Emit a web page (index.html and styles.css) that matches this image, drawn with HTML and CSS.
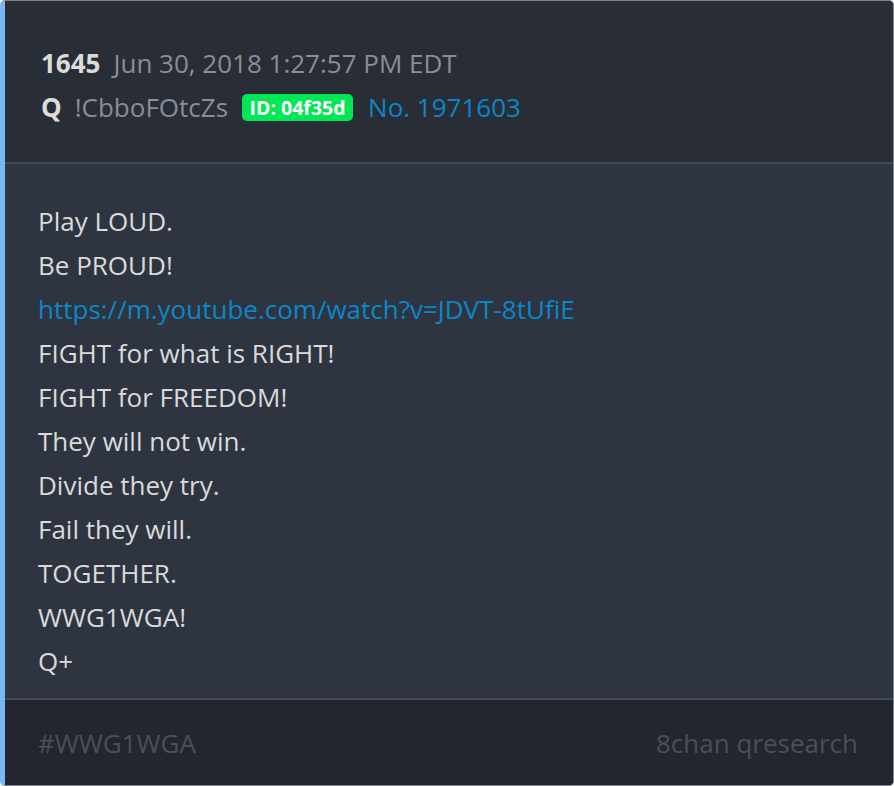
FILE: index.html
```html
<!DOCTYPE html>
<html lang="en">

<head>
    <meta charset="UTF-8">
    <meta name="viewport" content="width=device-width, initial-scale=1.0">
    <title>Post 1645</title>
    <link rel="stylesheet" href="styles.css">
</head>

<body>
    <div class="post">
        <div class="post-head">
            <div class="head-line">
                <span class="post-num">1645</span>
                <span class="post-date">Jun 30, 2018 1:27:57 PM EDT</span>
            </div>
            <div class="head-line">
                <span class="author">Q</span>
                <span class="trip">!CbboFOtcZs</span>
                <span class="user-id">ID: 04f35d</span>
                <a class="post-link" href="#">No. 1971603</a>
            </div>
        </div>

        <div class="post-body">
            <div>Play LOUD.</div>
            <div>Be PROUD!</div>
            <div><a href="#">https://m.youtube.com/watch?v=JDVT-8tUfiE</a></div>
            <div>FIGHT for what is RIGHT!</div>
            <div>FIGHT for FREEDOM!</div>
            <div>They will not win.</div>
            <div>Divide they try.</div>
            <div>Fail they will.</div>
            <div>TOGETHER.</div>
            <div>WWG1WGA!</div>
            <div>Q+</div>
        </div>

        <div class="post-foot">
            <span>#WWG1WGA</span>
            <span>8chan qresearch</span>
        </div>
    </div>
</body>

</html>
```

FILE: styles.css
```css
* {
    box-sizing: border-box;
}

body {
    margin: 0;
    background-color: #ffffff;
    font-family: "Open Sans", "Noto Sans", sans-serif;
}

a {
    color: #0b87c9;
    text-decoration: none;
}

.post {
    width: 894px;
    height: 786px;
    display: flex;
    flex-direction: column;
    border: 1px solid #80858f;
    border-left: 5px solid #7ab8f5;
    border-radius: 5px;
    background-color: #2f3540;
    overflow: hidden;
}

.post-head {
    padding: 40px 20px 33px 36px;
    background-color: #292d36;
    border-bottom: 2px solid #454b55;
    font-size: 26px;
}

.head-line {
    display: flex;
    align-items: center;
    gap: 13px;
    height: 44px;
}

.post-num,
.author {
    font-weight: bold;
    color: #dcdcdc;
}

.post-date,
.trip {
    color: #8a8e98;
}

.user-id {
    margin: 0 2px 0 1px;
    padding: 0 7.5px;
    border-radius: 5px;
    background-color: #00e756;
    color: #ffffff;
    font-size: 19.5px;
    font-weight: bold;
    line-height: 27px;
}

.post-body {
    flex: 1;
    padding: 35px 20px 0 33px;
    font-size: 26px;
    line-height: 44px;
    color: #dadada;
}

.post-foot {
    height: 87px;
    display: flex;
    justify-content: space-between;
    align-items: center;
    padding: 0 35px 0 33px;
    background-color: #23262e;
    border-top: 2px solid #454b55;
    font-size: 26px;
    color: #4a4f59;
}
```
